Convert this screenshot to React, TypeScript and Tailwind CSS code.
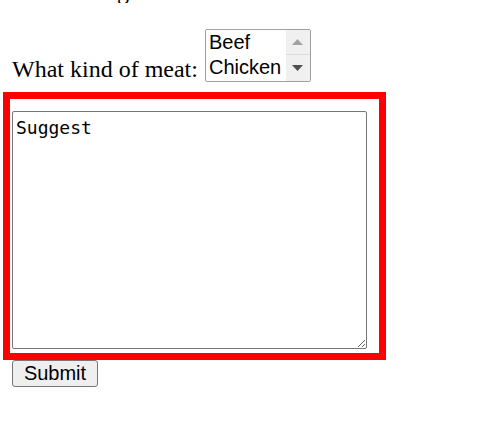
import React from "react";

export default function App() {
  return (
    <div className="w-[504px] h-[425px] bg-white overflow-hidden text-black font-['Liberation_Serif',serif]">
      <div className="h-[3px] overflow-hidden pl-[117px]">
        <div className="-mt-[21px] text-[24px] leading-[24px]">g</div>
      </div>
      <div className="mt-[26px] pl-[12px] flex items-end">
        <span className="text-[24px] leading-[24px] mb-[1px] mr-[7px]">What kind of meat:</span>
        <div className="w-[106px] h-[53px] border border-[#a0a0a0] rounded-[2px] flex bg-white font-['Liberation_Sans',Arial,sans-serif] text-[20px] leading-[25px]">
          <div className="flex-1 pl-[3px] pt-0">
            <div>Beef</div>
            <div>Chicken</div>
          </div>
          <div className="w-[24px] bg-[#f0f0f0] flex flex-col">
            <div className="h-[25px] flex items-center justify-center border-b border-[#dcdcdc]">
              <svg width="11" height="6" viewBox="0 0 11 6"><path d="M0 6 L5.5 0 L11 6 Z" fill="#a3a3a3" /></svg>
            </div>
            <div className="flex-1 flex items-center justify-center">
              <svg width="11" height="6" viewBox="0 0 11 6"><path d="M0 0 L11 0 L5.5 6 Z" fill="#505050" /></svg>
            </div>
          </div>
        </div>
      </div>
      <div className="mt-[10px] ml-[3px] w-[383px] h-[268px] border-[7px] border-[#ff0000] pl-[2px] pt-[12px]">
        <textarea
          defaultValue="Suggest"
          readOnly
          className="block w-[355px] h-[238px] border border-[#767676] rounded-[2px] px-[3px] pt-[4px] pb-[2px] font-['DejaVu_Sans_Mono',monospace] text-[18px] leading-[24px] outline-none resize"
        />
      </div>
      <button className="ml-[12px] w-[86px] h-[27px] bg-[#efefef] border border-[#767676] rounded-[3px] font-['Liberation_Sans',Arial,sans-serif] text-[20px] leading-[23px] flex items-center justify-center">
        Submit
      </button>
    </div>
  );
}
